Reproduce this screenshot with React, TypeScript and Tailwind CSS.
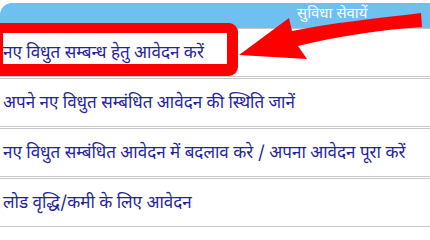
import React from "react";

const items = [
  "नए विधुत सम्बन्ध हेतु आवेदन करें",
  "अपने नए विधुत सम्बंधित आवेदन की स्थिति जानें",
  "नए विधुत सम्बंधित आवेदन में बदलाव करे / अपना आवेदन पूरा करें",
  "लोड वृद्धि/कमी के लिए आवेदन",
];

export default function App() {
  return (
    <div
      className="relative w-[430px] h-[227px] overflow-hidden bg-white"
      style={{ fontFamily: '"Noto Sans Devanagari", "Noto Sans", "Lohit Devanagari", sans-serif' }}
    >
      <div className="pt-[3px]">
        <div className="h-[25px] bg-[#6ec0f0] rounded-tl-[12px] flex items-center pl-[297px] pb-[3px]">
          <span className="text-white text-[15px] leading-none">सुविधा सेवायें</span>
        </div>
        <ul className="flex flex-col gap-[1px]">
          {items.map((t) => (
            <li
              key={t}
              className="h-[49px] border-y border-[#c8c8c8] flex items-center pl-[3px] pt-[3px]"
            >
              <a className="text-[#23239c] text-[17px] leading-none whitespace-nowrap">{t}</a>
            </li>
          ))}
        </ul>
      </div>

      <div className="absolute left-[-8px] top-[23px] w-[246px] h-[53px] border-t-[10px] border-r-[11px] border-b-[12px] border-l-[11px] border-[#ff0000] rounded-[9px]" />

      <svg
        className="absolute left-0 top-0 pointer-events-none"
        width="430"
        height="227"
        viewBox="0 0 430 227"
      >
        <path
          d="M239,55 L289,18 L292,31 C330,23 380,18 421,13 L422,27 C380,30 338,36 298,46 L307,59 Z"
          fill="#ff0000"
        />
      </svg>
    </div>
  );
}
